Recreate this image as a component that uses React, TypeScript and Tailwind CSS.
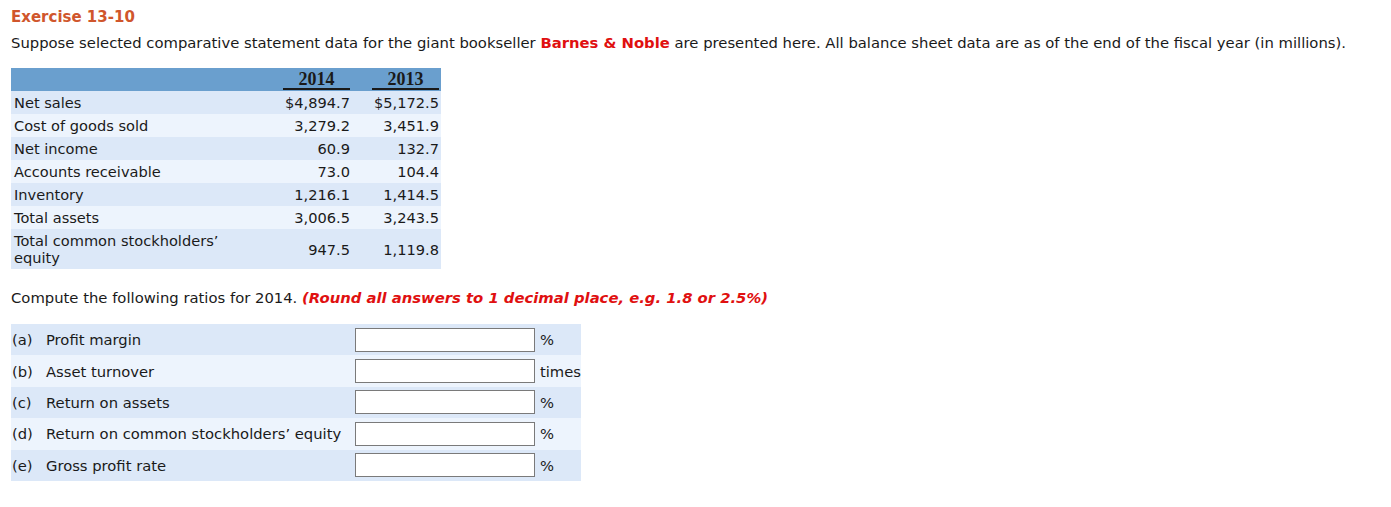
import React from 'react';

const rows = [
  { label: 'Net sales', a: '$4,894.7', b: '$5,172.5' },
  { label: 'Cost of goods sold', a: '3,279.2', b: '3,451.9' },
  { label: 'Net income', a: '60.9', b: '132.7' },
  { label: 'Accounts receivable', a: '73.0', b: '104.4' },
  { label: 'Inventory', a: '1,216.1', b: '1,414.5' },
  { label: 'Total assets', a: '3,006.5', b: '3,243.5' },
  { label: 'Total common stockholders’ equity', a: '947.5', b: '1,119.8' },
];

const ratios = [
  { key: '(a)', label: 'Profit margin', unit: '%' },
  { key: '(b)', label: 'Asset turnover', unit: 'times' },
  { key: '(c)', label: 'Return on assets', unit: '%' },
  { key: '(d)', label: 'Return on common stockholders’ equity', unit: '%' },
  { key: '(e)', label: 'Gross profit rate', unit: '%' },
];

export default function App() {
  return (
    <div className="min-h-screen bg-white pl-[11px] pt-[9px] text-[14.75px] leading-[17px] text-[#1a1a1a] font-['DejaVu_Sans',Verdana,sans-serif]">
      {/* Title */}
      <div className="text-[15px] font-bold text-[#d0562c]">Exercise 13-10</div>
      <p className="mt-[8px] text-[14.8px]">
        Suppose selected comparative statement data for the giant bookseller{' '}
        <span className="font-bold text-[#e01010]">Barnes &amp; Noble</span> are presented here. All balance
        sheet data are as of the end of the fiscal year (in millions).
      </p>

      {/* Statement data */}
      <table className="mt-[17px] w-[430px] border-collapse text-[14.6px]">
        <thead>
          <tr className="bg-[#6a9fce]">
            <th className="w-[252px]" />
            <th className="w-[89px] pr-[2px] pt-[3px] pb-[1px]">
              <div className="ml-auto w-[67px] border-b-2 border-[#1a1a1a] text-center font-['Liberation_Serif',serif] text-[18px] leading-[17px] font-bold">
                2014
              </div>
            </th>
            <th className="w-[89px] pr-[2px] pt-[3px] pb-[1px]">
              <div className="ml-auto w-[67px] border-b-2 border-[#1a1a1a] text-center font-['Liberation_Serif',serif] text-[18px] leading-[17px] font-bold">
                2013
              </div>
            </th>
          </tr>
        </thead>
        <tbody>
          {rows.map((r, i) => (
            <tr key={r.label} className={i % 2 === 0 ? 'bg-[#dce8f8]' : 'bg-[#edf4fd]'}>
              <td className="py-[3px] pl-[3px] pr-[20px] align-middle">{r.label}</td>
              <td className="py-[3px] pr-[2px] text-right align-middle">{r.a}</td>
              <td className="py-[3px] pr-[2px] text-right align-middle">{r.b}</td>
            </tr>
          ))}
        </tbody>
      </table>

      <p className="mt-[20px] text-[14.8px]">
        Compute the following ratios for 2014.{' '}
        <span className="font-bold italic text-[#e01010]">
          (Round all answers to 1 decimal place, e.g. 1.8 or 2.5%)
        </span>
      </p>

      {/* Ratios */}
      <table className="mt-[18px] w-[570px] border-collapse">
        <tbody>
          {ratios.map((r, i) => (
            <tr key={r.key} className={i % 2 === 0 ? 'bg-[#dce8f8]' : 'bg-[#edf4fd]'}>
              <td className="h-[31.4px] w-[35px] pl-[1px] align-middle">{r.key}</td>
              <td className="w-[309px] align-middle">{r.label}</td>
              <td className="w-[182px] align-middle">
                <input
                  type="text"
                  className="block h-[24px] w-[180px] border border-[#7a7a7a] bg-white px-1 outline-none"
                />
              </td>
              <td className="pl-[3px] align-middle">{r.unit}</td>
            </tr>
          ))}
        </tbody>
      </table>
    </div>
  );
}
